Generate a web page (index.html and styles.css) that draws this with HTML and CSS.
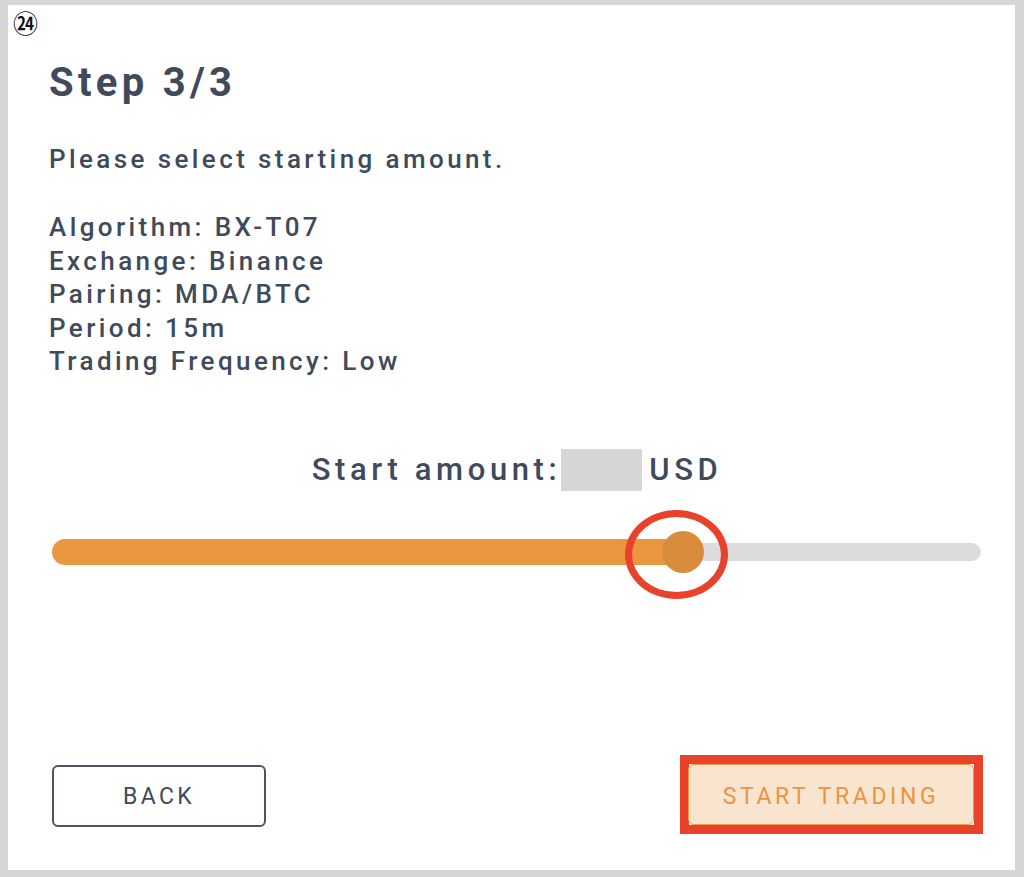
FILE: index.html
```html
<!DOCTYPE html>
<html>
<head>
<meta charset="utf-8">
<link rel="stylesheet" href="styles.css">
</head>
<body>
<div class="frame">
  <span class="badge">㉔</span>
  <h1 class="title">Step 3/3</h1>
  <p class="lead">Please select starting amount.</p>
  <div class="info">
    <div>Algorithm: BX-T07</div>
    <div>Exchange: Binance</div>
    <div>Pairing: MDA/BTC</div>
    <div>Period: 15m</div>
    <div>Trading Frequency: Low</div>
  </div>
  <div class="amount">
    <span>Start amount:</span><span class="mask"></span><span>USD</span>
  </div>
  <div class="slider">
    <div class="track"></div>
    <div class="fill" style="width: 67.9%">
      <span class="thumb"></span>
      <span class="ring"></span>
    </div>
  </div>
  <div class="actions">
    <button class="btn back">BACK</button>
    <div class="highlight"><button class="btn start">START TRADING</button></div>
  </div>
</div>
</body>
</html>
```
FILE: styles.css
```css
html, body {
  margin: 0;
  padding: 0;
}
body {
  background: #d6d6d6;
  font-family: Roboto, "Noto Sans", sans-serif;
  color: #3f4a5a;
}
.frame {
  position: relative;
  box-sizing: border-box;
  margin: 5px 9px 0 8px;
  height: 865px;
  background: #fff;
  padding: 0 42px 0 44px;
  display: flex;
  flex-direction: column;
}
.badge {
  position: absolute;
  left: 5px;
  top: 2px;
  font-family: "Noto Sans CJK JP", sans-serif;
  font-size: 25px;
  line-height: 30px;
  font-weight: 500;
  color: #111;
}
.title {
  margin: 52px 0 0 -3px;
  font-size: 40px;
  line-height: 52px;
  font-weight: 700;
  letter-spacing: 4.3px;
}
.lead {
  margin: 33px 0 0 -3px;
  font-size: 26px;
  line-height: 34px;
  font-weight: 500;
  letter-spacing: 3.4px;
}
.info {
  margin: 35px 0 0 -3px;
  font-size: 26px;
  line-height: 33.5px;
  font-weight: 500;
  letter-spacing: 3.4px;
}
.amount {
  margin-top: 70px;
  padding-left: 9px;
  display: flex;
  justify-content: center;
  align-items: center;
  font-size: 31px;
  font-weight: 500;
  letter-spacing: 4.6px;
  height: 42px;
}
.mask {
  display: inline-block;
  width: 81px;
  height: 42px;
  background: #d6d6d6;
  margin: 0 7px 0 0;
}
.slider {
  position: relative;
  margin: 48px -8px 0 0;
  height: 26px;
}
.track {
  position: absolute;
  left: 0;
  right: 0;
  top: 4px;
  height: 18px;
  border-radius: 9px;
  background: #dcdcde;
}
.fill {
  position: relative;
  height: 26px;
  border-radius: 13px 0 0 13px;
  background: #ea973f;
}
.thumb {
  position: absolute;
  right: -21px;
  top: -8px;
  width: 42px;
  height: 42px;
  border-radius: 50%;
  background: #d98d3c;
}
.ring {
  position: absolute;
  right: -45px;
  top: -29px;
  width: 89px;
  height: 75px;
  border: 7px solid #e8432a;
  border-radius: 50%;
}
.actions {
  margin-top: auto;
  margin-bottom: 36px;
  display: flex;
  justify-content: space-between;
  align-items: flex-end;
}
.btn {
  font-family: Roboto, "Noto Sans", sans-serif;
  font-size: 23px;
  letter-spacing: 3.3px;
  height: 62px;
  border-radius: 6px;
  cursor: pointer;
  padding: 0;
}
.back {
  width: 214px;
  margin-bottom: 7px;
  background: #fff;
  border: 2px solid #4a5568;
  color: #3f4a5a;
}
.highlight {
  border: 9px solid #e8432a;
  margin-right: -10px;
  display: flex;
}
.start {
  width: 286px;
  height: 61px;
  padding-top: 4px;
  letter-spacing: 3.6px;
  background: #f9e4d0;
  border: 1px solid #eb9a45;
  color: #e9953e;
  margin-left: -1px;
}
```
